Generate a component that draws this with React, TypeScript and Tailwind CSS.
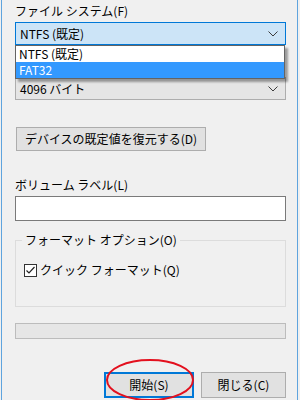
import React from "react";

// Chevron used by the combo boxes
const Chevron = () => (
  <svg width="10" height="6" viewBox="0 0 10 6" className="shrink-0">
    <polyline points="0.5,0.5 5,5 9.5,0.5" fill="none" stroke="#3c3c3c" strokeWidth="1" />
  </svg>
);

const App = () => {
  return (
    <div
      className="w-[300px] h-[400px] bg-[#f0f0f0] pl-[1px] overflow-hidden text-[12px] leading-[16px] text-black"
      style={{ fontFamily: '"Noto Sans CJK JP", "Noto Sans", sans-serif' }}
    >
      <div className="relative w-[297px] h-[400px] border-l border-r border-[#5fa4de] pl-[13px] pr-[11px]">
        {/* file system label */}
        <div className="pt-[3px] h-[22px]">ファイル システム(F)</div>

        {/* file system combo (open) */}
        <div className="h-[23px] border border-[#0078d7] bg-[#cce4f7] flex items-center justify-between pl-[4px] pr-[7px]">
          <span>NTFS (既定)</span>
          <Chevron />
        </div>

        {/* allocation unit size combo */}
        <div className="mt-[32px] h-[23px] border border-[#adadad] bg-[#e5e5e5] flex items-center justify-between pl-[4px] pr-[7px]">
          <span>4096 バイト</span>
          <Chevron />
        </div>

        {/* open dropdown list */}
        <div className="absolute left-[13px] top-[45px] w-[270px] border border-[#646464] bg-white shadow-[3px_3px_2px_rgba(0,0,0,0.35)]">
          <div className="h-[16px] pl-[3px] flex items-center">NTFS (既定)</div>
          <div className="h-[16px] pl-[3px] flex items-center bg-[#3399ff] text-white">FAT32</div>
        </div>

        <button className="mt-[27px] ml-[1px] w-[190px] h-[24px] border border-[#adadad] bg-[#e1e1e1] flex items-center justify-center">
          デバイスの既定値を復元する(D)
        </button>

        <div className="mt-[26px] h-[19px]">ボリューム ラベル(L)</div>
        <div className="h-[25px] border border-[#7a7a7a] bg-white"></div>

        {/* format options group */}
        <div className="relative mt-[19px] h-[67px] border border-[#dcdcdc]">
          <div className="absolute -top-[9px] left-[6px] bg-[#f0f0f0] px-[3px]">フォーマット オプション(O)</div>
          <div className="mt-[21px] ml-[8px] flex items-center gap-[3px]">
            <div className="w-[13px] h-[13px] border border-[#333] bg-white flex items-center justify-center">
              <svg width="11" height="11" viewBox="0 0 11 11">
                <polyline points="1.5,5.5 4,8 9.5,2" fill="none" stroke="#222" strokeWidth="1.2" />
              </svg>
            </div>
            <span>クイック フォーマット(Q)</span>
          </div>
        </div>

        {/* progress bar */}
        <div className="mt-[16px] h-[16px] border border-[#bcbcbc] bg-[#e6e6e6]"></div>

        {/* buttons */}
        <div className="mt-[33px] flex justify-end gap-[7px]">
          <button className="w-[90px] h-[26px] border-2 border-[#0078d7] bg-[#e1e1e1] flex items-center justify-center">
            開始(S)
          </button>
          <button className="w-[85px] h-[26px] border border-[#adadad] bg-[#e1e1e1] flex items-center justify-center">
            閉じる(C)
          </button>
        </div>

        {/* red annotation ellipse */}
        <svg className="absolute left-0 top-0 pointer-events-none" width="297" height="400">
          <ellipse cx="148" cy="380" rx="43" ry="20" fill="none" stroke="#e3101e" strokeWidth="2" />
        </svg>
      </div>
    </div>
  );
};

export default App;
